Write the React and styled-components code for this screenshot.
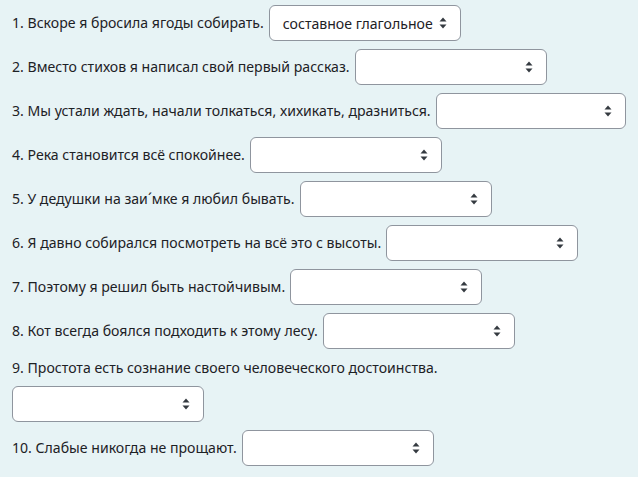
import React from "react";
import styled, { createGlobalStyle } from "styled-components";

const GlobalStyle = createGlobalStyle`
  body {
    margin: 0;
    background: #e7f3f5;
    font-family: "Noto Sans", "Open Sans", sans-serif;
    color: #1d2125;
  }
`;

const questions = [
  { text: "1. Вскоре я бросила ягоды собирать.", value: "составное глагольное" },
  { text: "2. Вместо стихов я написал свой первый рассказ." },
  { text: "3. Мы устали ждать, начали толкаться, хихикать, дразниться." },
  { text: "4. Река становится всё спокойнее." },
  { text: "5. У дедушки на заи\u00b4мке я любил бывать." },
  { text: "6. Я давно собирался посмотреть на всё это с высоты." },
  { text: "7. Поэтому я решил быть настойчивым." },
  { text: "8. Кот всегда боялся подходить к этому лесу." },
  { text: "9. Простота есть сознание своего человеческого достоинства." },
  { text: "10. Слабые никогда не прощают." },
];

function App() {
  return (
    <>
      <GlobalStyle />
      <Page>
        {questions.map((q, index) => (
          <Row key={index} $wrap={index === 8}>
            <Label>{q.text}</Label>
            <Select>
              <SelectValue>{q.value || ""}</SelectValue>
              <Caret viewBox="0 0 8 12">
                <path d="M4 0.5 L7.5 4.5 L0.5 4.5 Z" fill="#343a40" />
                <path d="M4 11.5 L7.5 7.5 L0.5 7.5 Z" fill="#343a40" />
              </Caret>
            </Select>
          </Row>
        ))}
      </Page>
    </>
  );
}

export default App;

const Page = styled.div`
  padding: 5px 12px 0 12px;
  width: 638px;
  box-sizing: border-box;
`;

const Row = styled.div`
  display: flex;
  flex-direction: ${(p) => (p.$wrap ? "column" : "row")};
  align-items: ${(p) => (p.$wrap ? "flex-start" : "center")};
  column-gap: 5px;
  row-gap: 7px;
  margin-bottom: 8px;
`;

const Label = styled.span`
  font-size: 14.1px;
  line-height: 22px;
  white-space: nowrap;
`;

const Select = styled.div`
  width: 192px;
  height: 36px;
  box-sizing: border-box;
  display: flex;
  align-items: center;
  justify-content: space-between;
  padding: 0 13px 0 13px;
  background: #fff;
  border: 1px solid #8f959e;
  border-radius: 6px;
`;

const SelectValue = styled.span`
  font-size: 14.1px;
  color: #1d2125;
  white-space: nowrap;
`;

const Caret = styled.svg`
  width: 8px;
  height: 12px;
  flex-shrink: 0;
`;
